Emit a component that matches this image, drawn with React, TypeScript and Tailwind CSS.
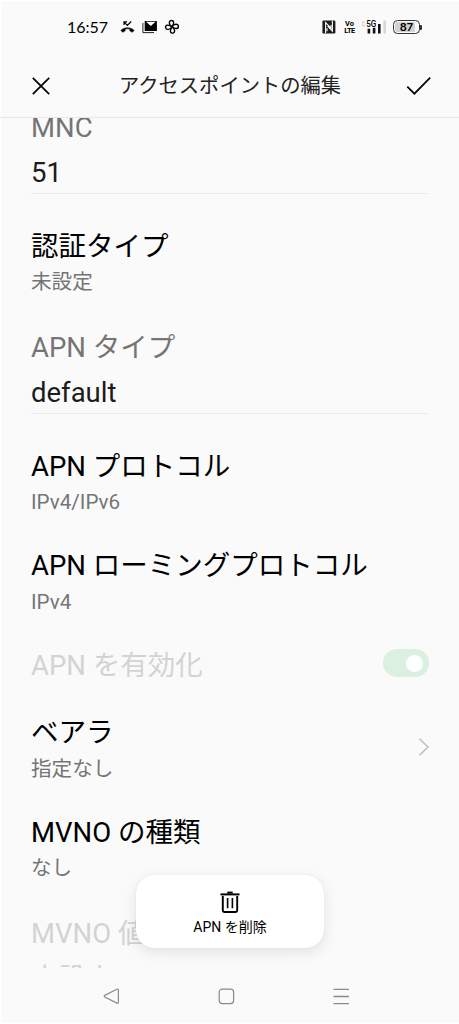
import type { ReactNode } from "react";

function StatusBar() {
  return (
    <div className="flex h-[54px] items-center pl-[67px] text-black">
      <span className="w-[53px] font-[Lato,sans-serif] text-[16px] leading-none whitespace-nowrap">
        16:57
      </span>
      {/* missed call */}
      <svg width="15" height="14" viewBox="0 0 15 14" className="shrink-0">
        <path d="M0.8 10.4C4.3 6.8 10.7 6.8 14.2 10.4L12.2 12.3L9.8 10.8V9.2C8.2 8.7 6.8 8.7 5.2 9.2V10.8L2.8 12.3Z" fill="#000" stroke="#000" strokeWidth="0.5" strokeLinejoin="round" />
        <path d="M4 5V1.9H7M4.2 2.1L7.3 5.4L11.2 1.5" fill="none" stroke="#000" strokeWidth="1.2" />
      </svg>
      {/* mail */}
      <svg width="16" height="14" viewBox="0 0 16 14" className="ml-[7px] shrink-0">
        <path d="M0.9 3V12.6H12" fill="none" stroke="#222" strokeWidth="1" />
        <path d="M2.7 1H14.9V11H2.7Z" fill="#000" />
        <path d="M4 1.8L8.8 5.9L13.6 1.8Z" fill="#fafafa" />
      </svg>
      {/* pinwheel */}
      <svg width="16" height="16" viewBox="0 0 16 16" className="ml-[6px] shrink-0" fill="none" stroke="#000" strokeWidth="1.4" strokeLinejoin="round">
        <path d="M8 7.8C4.6 5.8 4.6 1.7 7.2 1.5C10 1.2 10.6 4.2 8 7.8" />
        <path d="M8 7.8C10 4.4 14.1 4.6 14.4 7.2C14.6 9.9 11.6 10.4 8 7.8" />
        <path d="M8 7.8C11.4 9.8 11.3 13.9 8.7 14.1C6 14.4 5.4 11.4 8 7.8" />
        <path d="M8 7.8C6 11.2 1.9 11.1 1.6 8.5C1.4 5.8 4.4 5.2 8 7.8" />
      </svg>

      {/* NFC */}
      <svg width="14" height="14" viewBox="0 0 14 14" className="ml-[142px] shrink-0">
        <rect x="0.4" y="0.5" width="13" height="13" rx="1.2" fill="#1c1c1c" />
        <path d="M3.6 13.2V2.6L9 8.2V5M5 8.2V11.2M10.4 0.8V11.2L5.6 6.2" fill="none" stroke="#fafafa" strokeWidth="1.1" />
      </svg>
      <div className="ml-[8px] flex w-[11px] shrink-0 flex-col items-center font-[Roboto,sans-serif] text-[7.5px] leading-[7px] font-bold">
        <span>Vo</span>
        <span className="tracking-[-0.5px]">LTE</span>
      </div>
      {/* 5G signal */}
      <svg width="26" height="16" viewBox="0 0 26 16" className="ml-[6px] shrink-0 overflow-visible">
        <path d="M0.3 4.2L2.3 2L4.3 4.2ZM0.3 5.7L2.3 7.9L4.3 5.7Z" fill="#cfcfcf" />
        <text x="5.3" y="7.6" className="fill-black font-[Roboto,sans-serif] text-[8.8px] font-medium" textLength="10" lengthAdjust="spacingAndGlyphs">5G</text>
        <path d="M6.6 9.8H9.2V14.5H6.6ZM11.8 8.8H14.4V14.5H11.8ZM17 5H19.6V14.5H17Z" fill="#111" />
        <path d="M22.4 1.5H25V14.5H22.4Z" fill="#d8d8d8" />
      </svg>
      {/* battery */}
      <div className="ml-[6px] flex h-[14px] w-[27px] shrink-0 items-center rounded-[4.5px] border border-[#333] p-px">
        <div className="flex h-full w-full items-center justify-center rounded-[2.5px] bg-linear-to-r from-[#d2d2d2] from-85% to-[#fafafa] to-85% font-[Inter,sans-serif] text-[11px] leading-none font-semibold">
          87
        </div>
      </div>
      <div className="h-[5px] w-[2px] rounded-r-[1px] bg-[#333]" />
    </div>
  );
}

function Header() {
  return (
    <header className="flex h-[64px] items-center border-b border-[#e8e8e8] px-[31px]">
      <svg width="20" height="20" viewBox="0 0 20 20" className="shrink-0">
        <path d="M1.8 1.8L18.2 18.2M18.2 1.8L1.8 18.2" stroke="#000" strokeWidth="1.7" />
      </svg>
      <h1 className="ml-[68px] text-[20.3px] leading-[28px] whitespace-nowrap text-[#222]">
        アクセスポイントの編集
      </h1>
      <svg width="26" height="20" viewBox="0 0 26 20" className="-mr-[4px] ml-auto shrink-0">
        <path d="M1.3 10.7L8.4 17.7L24.2 1.7" fill="none" stroke="#000" strokeWidth="1.7" />
      </svg>
    </header>
  );
}

function Field({ label, value }: { label: string; value: string }) {
  return (
    <div className="h-[120.5px] shrink-0 pt-[1.5px]">
      <div className="h-[40px] text-[27.5px] leading-[40px] text-[#757575]">{label}</div>
      <div className="mt-[5px] h-[41.5px] border-b border-[#ebebeb] text-[27.5px] leading-[40px] text-[#1c1c1c]">
        {value}
      </div>
    </div>
  );
}

function Preference({ title, summary, children }: { title: string; summary: string; children?: ReactNode }) {
  return (
    <div className="flex h-[99.5px] shrink-0 justify-between">
      <div>
        <div className="text-[27.5px] leading-[40px] text-black">{title}</div>
        <div className="mt-[1.5px] text-[20.6px] leading-[28px] text-[#757575]">{summary}</div>
      </div>
      {children}
    </div>
  );
}

function DeleteButton() {
  return (
    <button
      type="button"
      className="absolute top-[874.5px] left-[136px] flex h-[73px] w-[188px] flex-col items-center rounded-[18px] bg-white pt-[16.5px] shadow-[0_4px_14px_rgba(0,0,0,0.1),0_0_1px_rgba(0,0,0,0.15)]"
    >
      <svg width="20" height="22" viewBox="0 0 20 22" fill="none" stroke="#000">
        <path d="M0.5 3.4H19.5" strokeWidth="2" />
        <path d="M7.3 1.6H12.7" strokeWidth="2" />
        <path d="M2.8 5V19.6Q2.8 21 4.2 21H15.8Q17.2 21 17.2 19.6V5" strokeWidth="1.9" />
        <path d="M7.6 7V17.3M12.4 7V17.3" strokeWidth="1.6" />
      </svg>
      <span className="mt-[4px] text-[14px] leading-[20px] text-black">APN を削除</span>
    </button>
  );
}

function NavBar() {
  return (
    <nav className="flex h-[56px] items-center pl-[103px]">
      <svg width="17" height="17" viewBox="0 0 17 17" fill="none" stroke="#8a8a8a" strokeWidth="1.2">
        <path d="M1.8 7.4L13.8 1.3Q15.4 0.7 15.4 2.3V14.2Q15.4 15.8 13.8 15.1L1.8 9Q0.6 8.2 1.8 7.4Z" />
      </svg>
      <svg width="17" height="17" viewBox="0 0 17 17" fill="none" stroke="#8a8a8a" strokeWidth="1.2" className="ml-[98px]">
        <rect x="1.2" y="1.2" width="14.4" height="14.4" rx="3" />
      </svg>
      <svg width="17" height="17" viewBox="0 0 17 17" stroke="#8a8a8a" strokeWidth="1.3" className="ml-[98px]">
        <path d="M0.5 1.3H16M0.5 8.5H16M0.5 15.7H16" />
      </svg>
    </nav>
  );
}

export default function App() {
  return (
    <div
      lang="ja"
      className="relative flex h-[1024px] w-[459px] flex-col overflow-hidden bg-[#fafafa] font-[Roboto,'Noto_Sans_CJK_JP',sans-serif] shadow-[inset_1px_1px_0_#fff,inset_0_-1px_0_#fff]"
    >
      <StatusBar />
      <Header />
      <main className="flex h-[850px] flex-col overflow-hidden px-[31px]">
        {/* list is scrolled, so the first field starts under the header */}
        <div className="-mt-[11.8px] flex flex-col">
          <Field label="MNC" value="51" />
          <Preference title="認証タイプ" summary="未設定" />
          <Field label="APN タイプ" value="default" />
          <Preference title="APN プロトコル" summary="IPv4/IPv6" />
          <Preference title="APN ローミングプロトコル" summary="IPv4" />
          <div className="flex h-[67.5px] shrink-0 justify-between text-[27.5px] leading-[40px] text-[#d3d3d3]">
            <span>APN を有効化</span>
            <div className="mt-[3.5px] -mr-px flex h-[28px] w-[46px] items-center justify-end rounded-full bg-[#dcf0e2] pr-[6px]">
              <div className="size-[17px] rounded-full bg-white" />
            </div>
          </div>
          <Preference title="ベアラ" summary="指定なし">
            <svg width="12" height="20" viewBox="0 0 12 20" className="mt-[23.5px] -mr-[2px]" fill="none" stroke="#bdbdbd" strokeWidth="1.5">
              <path d="M1.5 1.8L10 10L1.5 18.2" />
            </svg>
          </Preference>
          <Preference title="MVNO の種類" summary="なし" />
          <div className="shrink-0 pt-[1.5px] text-[27.5px] leading-[40px] text-[#d3d3d3]">
            <div>MVNO 値</div>
            <div className="mt-[5px]">未設定</div>
          </div>
        </div>
      </main>
      <NavBar />
      <DeleteButton />
    </div>
  );
}
